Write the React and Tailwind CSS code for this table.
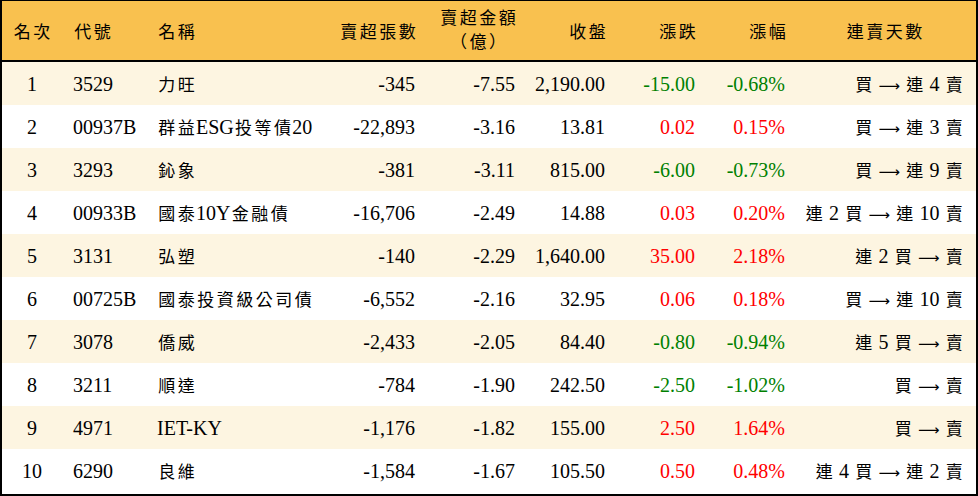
import React from 'react';

const rows = [
  ['1', '3529', '力旺', '-345', '-7.55', '2,190.00', '-15.00', '-0.68%', '買 → 連 4 賣'],
  ['2', '00937B', '群益ESG投等債20', '-22,893', '-3.16', '13.81', '0.02', '0.15%', '買 → 連 3 賣'],
  ['3', '3293', '鈊象', '-381', '-3.11', '815.00', '-6.00', '-0.73%', '買 → 連 9 賣'],
  ['4', '00933B', '國泰10Y金融債', '-16,706', '-2.49', '14.88', '0.03', '0.20%', '連 2 買 → 連 10 賣'],
  ['5', '3131', '弘塑', '-140', '-2.29', '1,640.00', '35.00', '2.18%', '連 2 買 → 賣'],
  ['6', '00725B', '國泰投資級公司債', '-6,552', '-2.16', '32.95', '0.06', '0.18%', '買 → 連 10 賣'],
  ['7', '3078', '僑威', '-2,433', '-2.05', '84.40', '-0.80', '-0.94%', '連 5 買 → 賣'],
  ['8', '3211', '順達', '-784', '-1.90', '242.50', '-2.50', '-1.02%', '買 → 賣'],
  ['9', '4971', 'IET-KY', '-1,176', '-1.82', '155.00', '2.50', '1.64%', '買 → 賣'],
  ['10', '6290', '良維', '-1,584', '-1.67', '105.50', '0.50', '0.48%', '連 4 買 → 連 2 賣'],
];

const cols = 'grid grid-cols-[60px_84px_174px_105px_100px_90px_90px_90px_1fr]';

const CJK = /[\u3400-\u9fff\uff00-\uffef]/;

// each CJK glyph sits small in a fixed 19.5px box, like the Ming face of the original
function T({ s }) {
  return Array.from(s).map((c, i) => {
    if (c === '→') {
      return (
        <span key={i} className="font-['DejaVu_Sans'] text-[15px]">
          ⟶
        </span>
      );
    }
    if (CJK.test(c)) {
      return (
        <span key={i} className="inline-block w-[19.5px] text-center text-[17px]">
          {c}
        </span>
      );
    }
    return c;
  });
}

export default function App() {
  return (
    <div
      className="w-[978px] h-[496px] border-t border-l-2 border-r-2 border-b-2 border-black bg-white text-black text-[20px]"
      style={{ fontFamily: '"Liberation Serif", "Noto Sans CJK TC", serif' }}
    >
      <div className={`${cols} h-[61px] items-center bg-[#f9c14f] border-b-2 border-black whitespace-nowrap`}>
        <div className="text-center"><T s="名次" /></div>
        <div className="pl-[11px]"><T s="代號" /></div>
        <div className="pl-[11px]"><T s="名稱" /></div>
        <div className="text-right pr-[8px]"><T s="賣超張數" /></div>
        <div className="flex justify-end pr-[8px]">
          <div className="flex flex-col items-center leading-[22px] -mt-[2px]">
            <span><T s="賣超金額" /></span>
            <span><T s="（億）" /></span>
          </div>
        </div>
        <div className="text-right pr-[8px]"><T s="收盤" /></div>
        <div className="text-right pr-[8px]"><T s="漲跌" /></div>
        <div className="text-right pr-[8px]"><T s="漲幅" /></div>
        <div className="text-center pr-[2px]"><T s="連賣天數" /></div>
      </div>
      {rows.map((r, i) => {
        const neg = r[6].startsWith('-');
        const color = neg ? 'text-[#008000]' : 'text-[#ff0000]';
        return (
          <div key={i} className={`${cols} h-[43px] items-center ${i % 2 === 0 ? 'bg-[#fdf5e1]' : 'bg-white'}`}>
            <div className="text-center">{r[0]}</div>
            <div className="pl-[11px]">{r[1]}</div>
            <div className="pl-[11px] whitespace-nowrap"><T s={r[2]} /></div>
            <div className="text-right pr-[10px]">{r[3]}</div>
            <div className="text-right pr-[10px]">{r[4]}</div>
            <div className="text-right pr-[10px]">{r[5]}</div>
            <div className={`text-right pr-[10px] ${color}`}>{r[6]}</div>
            <div className={`text-right pr-[10px] ${color}`}>{r[7]}</div>
            <div className="text-right pr-[12px] whitespace-nowrap"><T s={r[8]} /></div>
          </div>
        );
      })}
    </div>
  );
}
